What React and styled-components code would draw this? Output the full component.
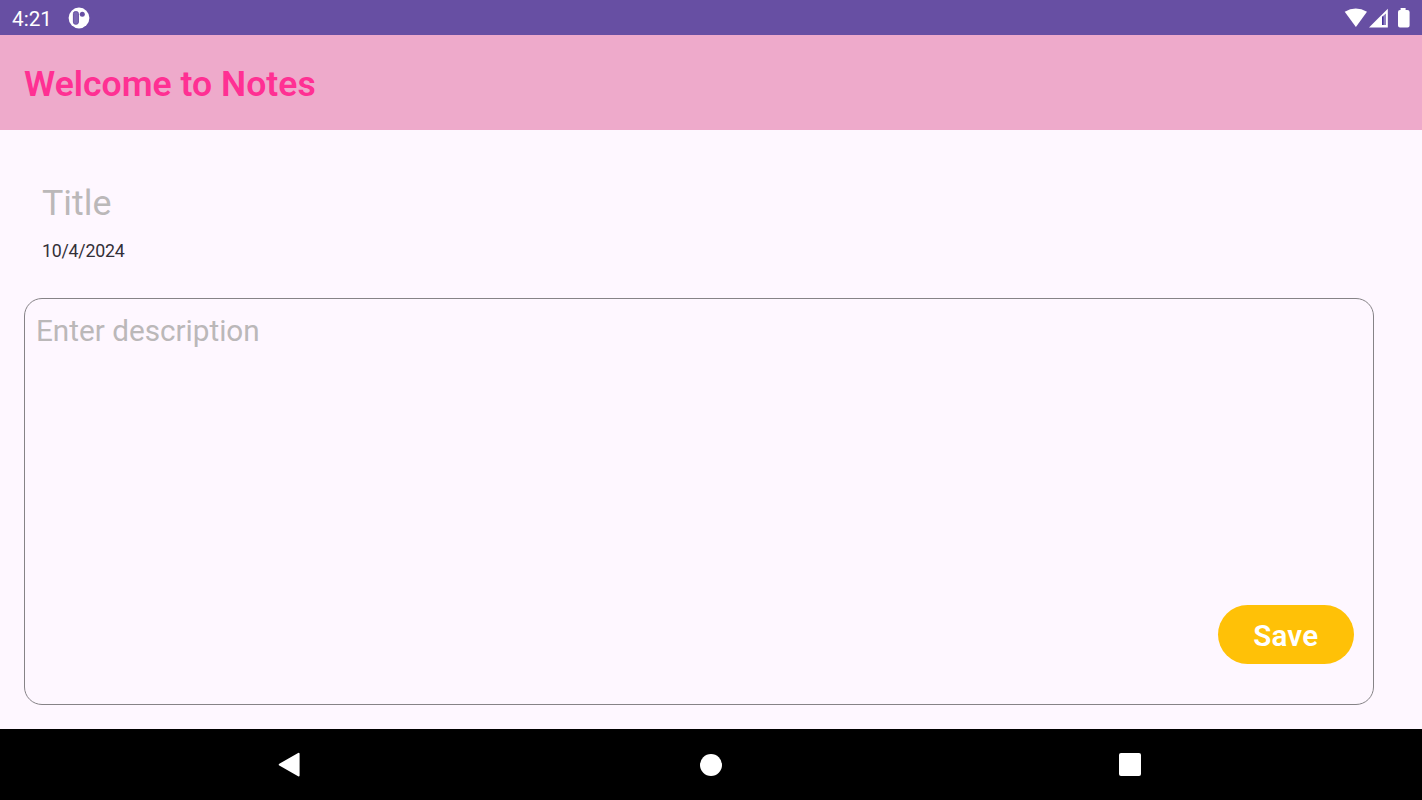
import React, { useState } from 'react';
import styled, { createGlobalStyle } from 'styled-components';

const App = () => {
  const [note, setNote] = useState({
    title: '',
    description: '',
  });

  const onChange = (e) => {
    setNote({ ...note, [e.target.name]: e.target.value });
  };

  return (
    <Screen>
      <GlobalStyle />
      <StatusBar>
        <StatusGroup>
          <Clock>4:21</Clock>
          <AppBadge />
        </StatusGroup>
        <StatusIcons />
      </StatusBar>

      <Header>
        <Heading>Welcome to Notes</Heading>
      </Header>

      <Content>
        <TitleInput
          name="title"
          placeholder="Title"
          value={note.title}
          onChange={onChange}
        />
        <DateText>10/4/2024</DateText>
        <DescriptionBox>
          <DescriptionInput
            name="description"
            placeholder="Enter description"
            value={note.description}
            onChange={onChange}
          />
          <SaveButton>Save</SaveButton>
        </DescriptionBox>
      </Content>

      <NavBar>
        <NavButton aria-label="Back">
          <svg width="24" height="26" viewBox="0 0 24 26">
            <path d="M1.8 12.6 L20.6 1.8 V23.4 Z" fill="#fff" stroke="#fff" strokeWidth="2" strokeLinejoin="round" />
          </svg>
        </NavButton>
        <NavButton aria-label="Home">
          <HomeDot />
        </NavButton>
        <NavButton aria-label="Recents">
          <RecentSquare />
        </NavButton>
      </NavBar>
    </Screen>
  );
};

/* status bar icons */

const AppBadge = () => (
  <svg width="22" height="22" viewBox="0 0 22 22">
    <circle cx="11" cy="11" r="10.4" fill="#fff" />
    <rect x="5.4" y="4.6" width="5" height="12.6" rx="2" fill="#7c68b3" stroke="#674fa3" strokeWidth="1" />
    <circle cx="14.3" cy="7.2" r="2.5" fill="#674fa3" />
  </svg>
);

const StatusIcons = () => (
  <svg width="68" height="24" viewBox="0 0 68 24">
    {/* wifi */}
    <path d="M0.7 5.8 Q11.7 -0.6 23 5.8 L11.9 21 Z" fill="#fff" />
    {/* signal */}
    <path d="M43.8 2.8 V21.4 H25 Z" fill="#fff" />
    <path d="M38 10.8 L42 7.6 V19 H38 Z" fill="#8f7fc0" />
    <path d="M38.8 10.6 V19" stroke="#3f2a96" strokeWidth="1.4" />
    {/* battery */}
    <path d="M56.6 2 H61.6 V4 H63.4 Q65.6 4 65.6 6 V19.6 Q65.6 21.6 63.6 21.6 H56 Q54 21.6 54 19.6 V6 Q54 4 56 4 H56.6 Z" fill="#fff" />
  </svg>
);

const GlobalStyle = createGlobalStyle`
  * {
    box-sizing: border-box;
  }

  body {
    margin: 0;
    font-family: Roboto, "Liberation Sans", sans-serif;
  }
`;

const Screen = styled.div`
  width: 100%;
  height: 100vh;
  display: flex;
  flex-direction: column;
  background-color: #fef7ff;
  overflow: hidden;
`;

const StatusBar = styled.div`
  height: 35.4px;
  flex-shrink: 0;
  display: flex;
  justify-content: space-between;
  align-items: center;
  padding: 0 10px 0 12px;
  background-color: #674fa3;
`;

const StatusGroup = styled.div`
  display: flex;
  align-items: center;
  gap: 16px;
`;

const Clock = styled.span`
  color: #fff;
  font-size: 20.7px;
  line-height: 24px;
  padding-top: 2px;
`;

const Header = styled.header`
  height: 94.6px;
  flex-shrink: 0;
  display: flex;
  align-items: center;
  padding: 2px 24px 0;
  background-color: #eeaacb;
`;

const Heading = styled.h1`
  margin: 0;
  color: #ff3093;
  font-size: 35.5px;
  font-weight: 600;
  line-height: 42px;
  letter-spacing: 0.03px;
`;

const Content = styled.main`
  flex: 1;
  display: flex;
  flex-direction: column;
  padding: 49px 48px 24px 24px;
`;

const TitleInput = styled.input`
  height: 48px;
  margin-left: 18px;
  padding: 0;
  border: none;
  outline: none;
  background: transparent;
  color: #1d1b20;
  font-family: inherit;
  font-size: 35.8px;

  &::placeholder {
    color: #bbb8b9;
  }
`;

const DateText = styled.div`
  margin: 13px 0 0 18px;
  color: #333038;
  font-size: 17.8px;
  line-height: 22px;
  letter-spacing: -0.25px;
`;

const DescriptionBox = styled.section`
  flex: 1;
  display: flex;
  flex-direction: column;
  align-items: flex-end;
  margin-top: 36px;
  padding: 11px 19px 40px 11px;
  border: 1.4px solid #868387;
  border-radius: 18px;
`;

const DescriptionInput = styled.textarea`
  flex: 1;
  width: 100%;
  padding: 3px 0 0;
  border: none;
  outline: none;
  resize: none;
  background: transparent;
  color: #1d1b20;
  font-family: inherit;
  font-size: 29.7px;
  line-height: 36px;

  &::placeholder {
    color: #bbb8b9;
  }
`;

const SaveButton = styled.button`
  width: 136.5px;
  height: 59.5px;
  padding: 3px 0 0;
  border: none;
  border-radius: 30px;
  background-color: #ffc107;
  color: #fff;
  font-family: inherit;
  font-size: 29.6px;
  font-weight: 600;
  letter-spacing: 0.2px;
  cursor: pointer;
`;

const NavBar = styled.nav`
  height: 71px;
  flex-shrink: 0;
  display: grid;
  grid-template-columns: 422px 421px 417px;
  justify-content: center;
  padding-right: 5px;
  background-color: #000;
`;

const NavButton = styled.button`
  display: flex;
  align-items: center;
  justify-content: center;
  padding: 0;
  border: none;
  background: transparent;
  cursor: pointer;
`;

const HomeDot = styled.span`
  width: 22px;
  height: 22px;
  border-radius: 50%;
  background-color: #fff;
`;

const RecentSquare = styled.span`
  width: 22.5px;
  height: 22.5px;
  border-radius: 2px;
  background-color: #fff;
`;

export default App;
